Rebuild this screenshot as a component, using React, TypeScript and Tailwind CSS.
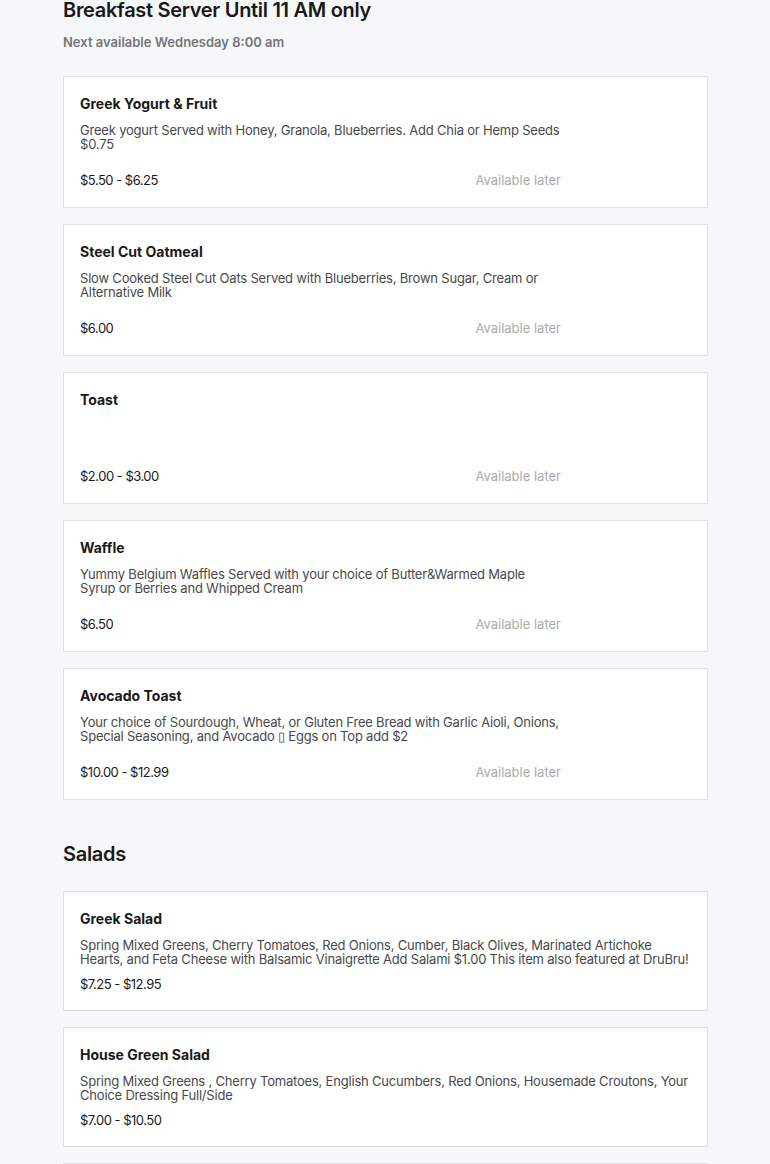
type Item = {
  name: string;
  description?: string;
  price: string;
};

const breakfast: Item[] = [
  {
    name: "Greek Yogurt & Fruit",
    description:
      "Greek yogurt Served with Honey, Granola, Blueberries. Add Chia or Hemp Seeds $0.75",
    price: "$5.50 - $6.25",
  },
  {
    name: "Steel Cut Oatmeal",
    description:
      "Slow Cooked Steel Cut Oats Served with Blueberries, Brown Sugar, Cream or Alternative Milk",
    price: "$6.00",
  },
  { name: "Toast", price: "$2.00 - $3.00" },
  {
    name: "Waffle",
    description:
      "Yummy Belgium Waffles Served with your choice of Butter&Warmed Maple Syrup or Berries and Whipped Cream",
    price: "$6.50",
  },
  {
    name: "Avocado Toast",
    description:
      "Your choice of Sourdough, Wheat, or Gluten Free Bread with Garlic Aioli, Onions, Special Seasoning, and Avocado \u25AF Eggs on Top add $2",
    price: "$10.00 - $12.99",
  },
];

const salads: Item[] = [
  {
    name: "Greek Salad",
    description:
      "Spring Mixed Greens, Cherry Tomatoes, Red Onions, Cumber, Black Olives, Marinated Artichoke Hearts, and Feta Cheese with Balsamic Vinaigrette Add Salami $1.00 This item also featured at DruBru!",
    price: "$7.25 - $12.95",
  },
  {
    name: "House Green Salad",
    description:
      "Spring Mixed Greens , Cherry Tomatoes, English Cucumbers, Red Onions, Housemade Croutons, Your Choice Dressing Full/Side",
    price: "$7.00 - $10.50",
  },
];

function LaterCard({ item }: { item: Item }) {
  return (
    <div className="bg-white border border-[#e2e2e2] h-[132px] px-4 pt-[18px] pb-[17px] flex flex-col">
      <div className="w-[481px] flex flex-col h-full">
        <h3 className="text-[14px] leading-[18px] font-bold text-[#191919]">{item.name}</h3>
        {item.description && (
          <p className="mt-[10px] text-[13px] leading-[14px] text-[#494949] tracking-[-0.2px]">
            {item.description}
          </p>
        )}
        <div className="mt-auto flex justify-between items-center text-[13px] leading-[20px]">
          <span className="text-[#191919] tracking-[-0.5px]">{item.price}</span>
          <span className="text-[#ababab]">Available later</span>
        </div>
      </div>
    </div>
  );
}

function SaladCard({ item }: { item: Item }) {
  return (
    <div className="bg-white border border-[#e2e2e2] px-4 pt-[18px] pb-[16px]">
      <h3 className="text-[14px] leading-[18px] font-bold text-[#191919]">{item.name}</h3>
      <p className="mt-[10px] text-[13px] leading-[14px] text-[#494949] tracking-[-0.2px]">
        {item.description}
      </p>
      <div className="mt-[8px] text-[13px] leading-[20px] text-[#191919] tracking-[-0.5px]">
        {item.price}
      </div>
    </div>
  );
}

export default function App() {
  return (
    <div
      className="min-h-screen bg-[#f6f7f8] pl-[63px] pr-[62px]"
      style={{ fontFamily: "Inter, 'Noto Sans', sans-serif" }}
    >
      <h1 className="text-[20px] leading-[20px] font-semibold text-[#191919] tracking-[-0.3px]">
        Breakfast Server Until 11 AM only
      </h1>
      <p className="mt-[14px] text-[13px] leading-[16px] font-semibold text-[#767676]">
        Next available Wednesday 8:00 am
      </p>
      <div className="mt-[26px] flex flex-col gap-4">
        {breakfast.map((it) => (
          <LaterCard key={it.name} item={it} />
        ))}
      </div>
      <h2 className="mt-[43px] text-[20px] leading-[22px] font-semibold text-[#191919] tracking-[-0.3px]">
        Salads
      </h2>
      <div className="mt-[26px] flex flex-col gap-4 pb-10">
        {salads.map((it) => (
          <SaladCard key={it.name} item={it} />
        ))}
        <div className="bg-white border border-[#e2e2e2] h-[120px]" />
      </div>
    </div>
  );
}
